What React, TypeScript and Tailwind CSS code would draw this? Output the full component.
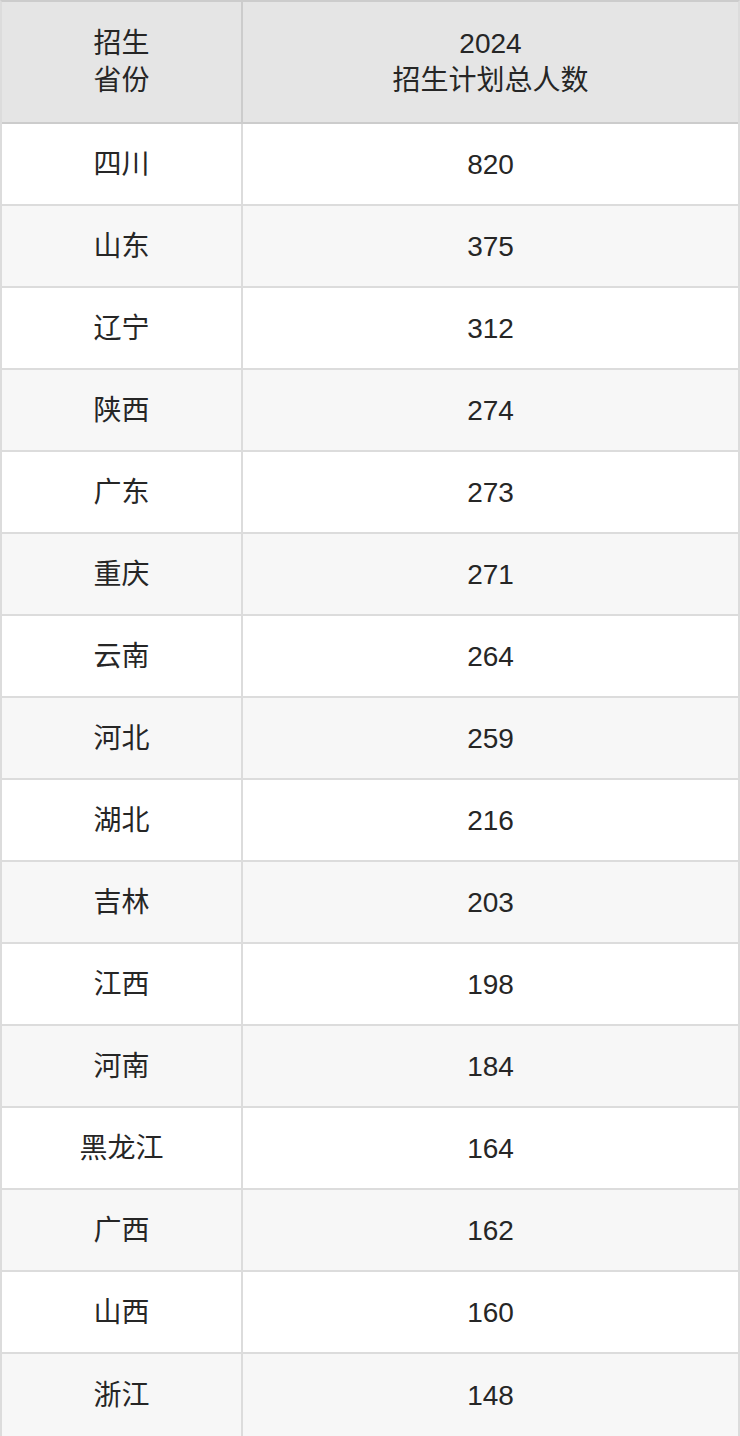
import React from "react";

const rows: [string, string][] = [
  ["四川", "820"],
  ["山东", "375"],
  ["辽宁", "312"],
  ["陕西", "274"],
  ["广东", "273"],
  ["重庆", "271"],
  ["云南", "264"],
  ["河北", "259"],
  ["湖北", "216"],
  ["吉林", "203"],
  ["江西", "198"],
  ["河南", "184"],
  ["黑龙江", "164"],
  ["广西", "162"],
  ["山西", "160"],
  ["浙江", "148"],
];

export default function App() {
  return (
    <div
      className="w-[740px] bg-white text-[28px] text-[#262626] leading-[37px]"
      style={{ fontFamily: '"Liberation Sans", "Noto Sans CJK SC", sans-serif' }}
    >
      <div className="border-2 border-[#dcdcdc] border-t-[#cccccc]">
        {/* header */}
        <div className="flex h-[122px] border-b-2 border-[#cccccc] bg-[#e5e5e5]">
          <div className="w-[241px] border-r-2 border-[#cccccc] flex flex-col items-center justify-center">
            <div>招生</div>
            <div>省份</div>
          </div>
          <div className="flex-1 flex flex-col items-center justify-center">
            <div>2024</div>
            <div>招生计划总人数</div>
          </div>
        </div>
        {rows.map(([prov, num], i) => (
          <div
            key={prov}
            className={
              "flex h-[82px] border-[#dcdcdc] " +
              (i < rows.length - 1 ? "border-b-2 " : "") +
              (i % 2 === 1 ? "bg-[#f7f7f7]" : "bg-white")
            }
          >
            <div className="w-[241px] border-r-2 border-[#dcdcdc] flex items-center justify-center">
              {prov}
            </div>
            <div className="flex-1 flex items-center justify-center">{num}</div>
          </div>
        ))}
      </div>
    </div>
  );
}
